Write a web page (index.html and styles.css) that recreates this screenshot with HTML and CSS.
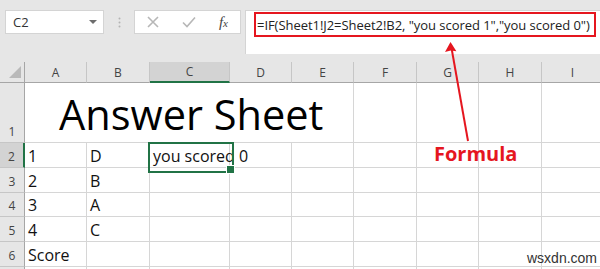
FILE: index.html
```html
<!DOCTYPE html>
<html lang="en">
  <head>
    <meta charset="UTF-8" />
    <title>Answer Sheet</title>
    <link rel="stylesheet" href="styles.css">
  </head>
  <body>
    <div class="app">
      <!-- строка формул -->
      <div class="toolbar">
        <div class="namebox">
          <span>C2</span>
          <svg class="caret" width="8" height="5" viewBox="0 0 8 5"><path d="M0 0h8L4 4z" fill="#6d6d6d"/></svg>
        </div>
        <div class="grip">
          <svg width="3" height="11" viewBox="0 0 3 11"><circle cx="1.5" cy="1.5" r="1" fill="#b3b3b3"/><circle cx="1.5" cy="5.5" r="1" fill="#b3b3b3"/><circle cx="1.5" cy="9.5" r="1" fill="#b3b3b3"/></svg>
        </div>
        <div class="btns">
          <svg width="12" height="12" viewBox="0 0 12 12"><path d="M1 1l10 10M11 1L1 11" stroke="#b7b7b7" stroke-width="1.6"/></svg>
          <svg width="14" height="12" viewBox="0 0 14 12"><path d="M1 6.5l4 4L13 1.5" stroke="#b7b7b7" stroke-width="1.6" fill="none"/></svg>
          <span class="fx"><i>f</i><small>x</small></span>
        </div>
        <div class="formula">
          <div class="formula-text">=IF(Sheet1!J2=Sheet2!B2, "you scored 1","you scored 0")</div>
        </div>
      </div>

      <!-- таблица -->
      <div class="sheet">
        <div class="hd corner"><svg width="12" height="12" viewBox="0 0 12 12"><path d="M12 0v12H0z" fill="#b9b9b9"/></svg></div>
        <div class="hd col">A</div>
        <div class="hd col">B</div>
        <div class="hd col active">C</div>
        <div class="hd col">D</div>
        <div class="hd col">E</div>
        <div class="hd col">F</div>
        <div class="hd col">G</div>
        <div class="hd col">H</div>
        <div class="hd col">I</div>

        <div class="hd row">1</div>
        <div class="cell title">Answer Sheet</div>
        <div class="cell"></div><div class="cell"></div><div class="cell"></div><div class="cell"></div>

        <div class="hd row active">2</div>
        <div class="cell">1</div>
        <div class="cell">D</div>
        <div class="cell selected">you scored 0</div>
        <div class="cell"></div><div class="cell"></div><div class="cell"></div><div class="cell"></div><div class="cell"></div><div class="cell"></div>

        <div class="hd row">3</div>
        <div class="cell">2</div>
        <div class="cell">B</div>
        <div class="cell"></div><div class="cell"></div><div class="cell"></div><div class="cell"></div><div class="cell"></div><div class="cell"></div><div class="cell"></div>

        <div class="hd row">4</div>
        <div class="cell">3</div>
        <div class="cell">A</div>
        <div class="cell"></div><div class="cell"></div><div class="cell"></div><div class="cell"></div><div class="cell"></div><div class="cell"></div><div class="cell"></div>

        <div class="hd row">5</div>
        <div class="cell">4</div>
        <div class="cell">C</div>
        <div class="cell"></div><div class="cell"></div><div class="cell"></div><div class="cell"></div><div class="cell"></div><div class="cell"></div><div class="cell"></div>

        <div class="hd row">6</div>
        <div class="cell">Score</div>
        <div class="cell"></div><div class="cell"></div><div class="cell"></div><div class="cell"></div><div class="cell"></div><div class="cell"></div><div class="cell"></div><div class="cell"></div>

        <div class="hd row"></div>
        <div class="cell"></div><div class="cell"></div><div class="cell"></div><div class="cell"></div><div class="cell"></div><div class="cell"></div><div class="cell"></div><div class="cell"></div><div class="cell"></div>
      </div>

      <!-- пометка -->
      <svg class="arrow" width="600" height="269" viewBox="0 0 600 269">
        <line x1="468" y1="141" x2="451.5" y2="48" stroke="#e5161f" stroke-width="2"/>
        <path d="M450.5 42l-5.5 10 5.8-1.4 5.6 0.6z" fill="#e5161f"/>
      </svg>
      <div class="note">Formula</div>
      <div class="watermark">wsxdn.com</div>
    </div>
  </body>
</html>
```

FILE: styles.css
```css
:root {
  --grid-line: #d6d6d6;
  --header-bg: #e6e6e6;
  --header-line: #c6c6c6;
  --excel-green: #217346;
  --note-red: #e5161f;
}
* {
  box-sizing: border-box;
}
body {
  margin: 0;
  overflow: hidden;
  font-family: "Open Sans", sans-serif;
}
.app {
  position: relative;
  width: 600px;
  height: 269px;
  overflow: hidden;
  background: #fff;
}

/* Строка формул */
.toolbar {
  display: flex;
  align-items: flex-start;
  height: 62px;
  padding: 10px 0 0 5px;
  background: var(--header-bg);
}
.namebox {
  display: flex;
  align-items: center;
  justify-content: space-between;
  width: 99px;
  height: 24px;
  padding: 0 6px 0 7px;
  background: #fff;
  border: 1px solid #d4d4d4;
  font-size: 13px;
  color: #333;
}
.grip {
  display: flex;
  justify-content: center;
  width: 30px;
  padding-top: 7px;
}
.btns {
  display: flex;
  align-items: center;
  justify-content: space-between;
  width: 107px;
  height: 24px;
  padding: 0 12px 0 12px;
  background: #fff;
  border: 1px solid #d4d4d4;
}
.fx {
  font-family: "Liberation Serif", serif;
  font-size: 15px;
  color: #444;
}
.fx small {
  font-size: 11px;
  font-style: italic;
}
.formula {
  flex: 1;
  height: 44px;
  margin-left: 4px;
  padding: 1px 4px 0 8px;
  background: #fff;
  border-top: 1px solid #d4d4d4;
  border-left: 1px solid #d4d4d4;
}
.formula-text {
  height: 25px;
  padding: 2px 0 0 1px;
  border: 2px solid var(--note-red);
  font-size: 13px;
  letter-spacing: -0.05px;
  color: #222;
  white-space: nowrap;
  overflow: hidden;
}

/* Таблица */
.sheet {
  display: grid;
  grid-template-columns: 25px 62px 63px 80px 62px 62px 63px 62px 63px 62px;
  grid-template-rows: 21px 60px 25px 25px 24px 25px 25px 25px;
}
.hd {
  background: var(--header-bg);
  color: #444;
  font-size: 12px;
}
.hd.col {
  display: flex;
  align-items: center;
  justify-content: center;
  border-right: 1px solid var(--header-line);
  border-bottom: 1px solid #a6a6a6;
}
.hd.row {
  display: flex;
  align-items: flex-end;
  justify-content: center;
  padding-bottom: 2px;
  border-right: 1px solid #a6a6a6;
  border-bottom: 1px solid var(--header-line);
}
.corner {
  display: flex;
  align-items: flex-end;
  justify-content: flex-end;
  padding: 0 3px 4px 0;
  border-right: 1px solid #a6a6a6;
  border-bottom: 1px solid #a6a6a6;
}
.hd.col.active {
  background: #d3d3d3;
  border-bottom: 2px solid var(--excel-green);
}
.hd.row.active {
  background: #d3d3d3;
  border-right: 2px solid var(--excel-green);
}
.cell {
  display: flex;
  align-items: flex-end;
  padding: 0 0 0 3px;
  border-right: 1px solid var(--grid-line);
  border-bottom: 1px solid var(--grid-line);
  font-size: 16px;
  line-height: 22px;
  color: #111;
  white-space: nowrap;
}
.title {
  grid-column: span 5;
  padding: 0 0 3px 34px;
  font-size: 41.5px;
  line-height: 50px;
  color: #000;
}
.selected {
  position: relative;
}
.selected::before {
  content: "";
  position: absolute;
  left: -2px;
  top: -1px;
  width: 82px;
  height: 27px;
  border: 2px solid var(--excel-green);
}
.selected::after {
  content: "";
  position: absolute;
  left: 76px;
  top: 22px;
  width: 7px;
  height: 7px;
  background: var(--excel-green);
  border: 1px solid #fff;
}

/* Пометки поверх */
.arrow {
  position: absolute;
  left: 0;
  top: 0;
}
.note {
  position: absolute;
  left: 434px;
  top: 140px;
  font-size: 20px;
  font-weight: bold;
  color: var(--note-red);
}
.watermark {
  position: absolute;
  left: 527px;
  top: 250px;
  font-family: "Liberation Sans", sans-serif;
  font-size: 14px;
  color: #333;
}
```
